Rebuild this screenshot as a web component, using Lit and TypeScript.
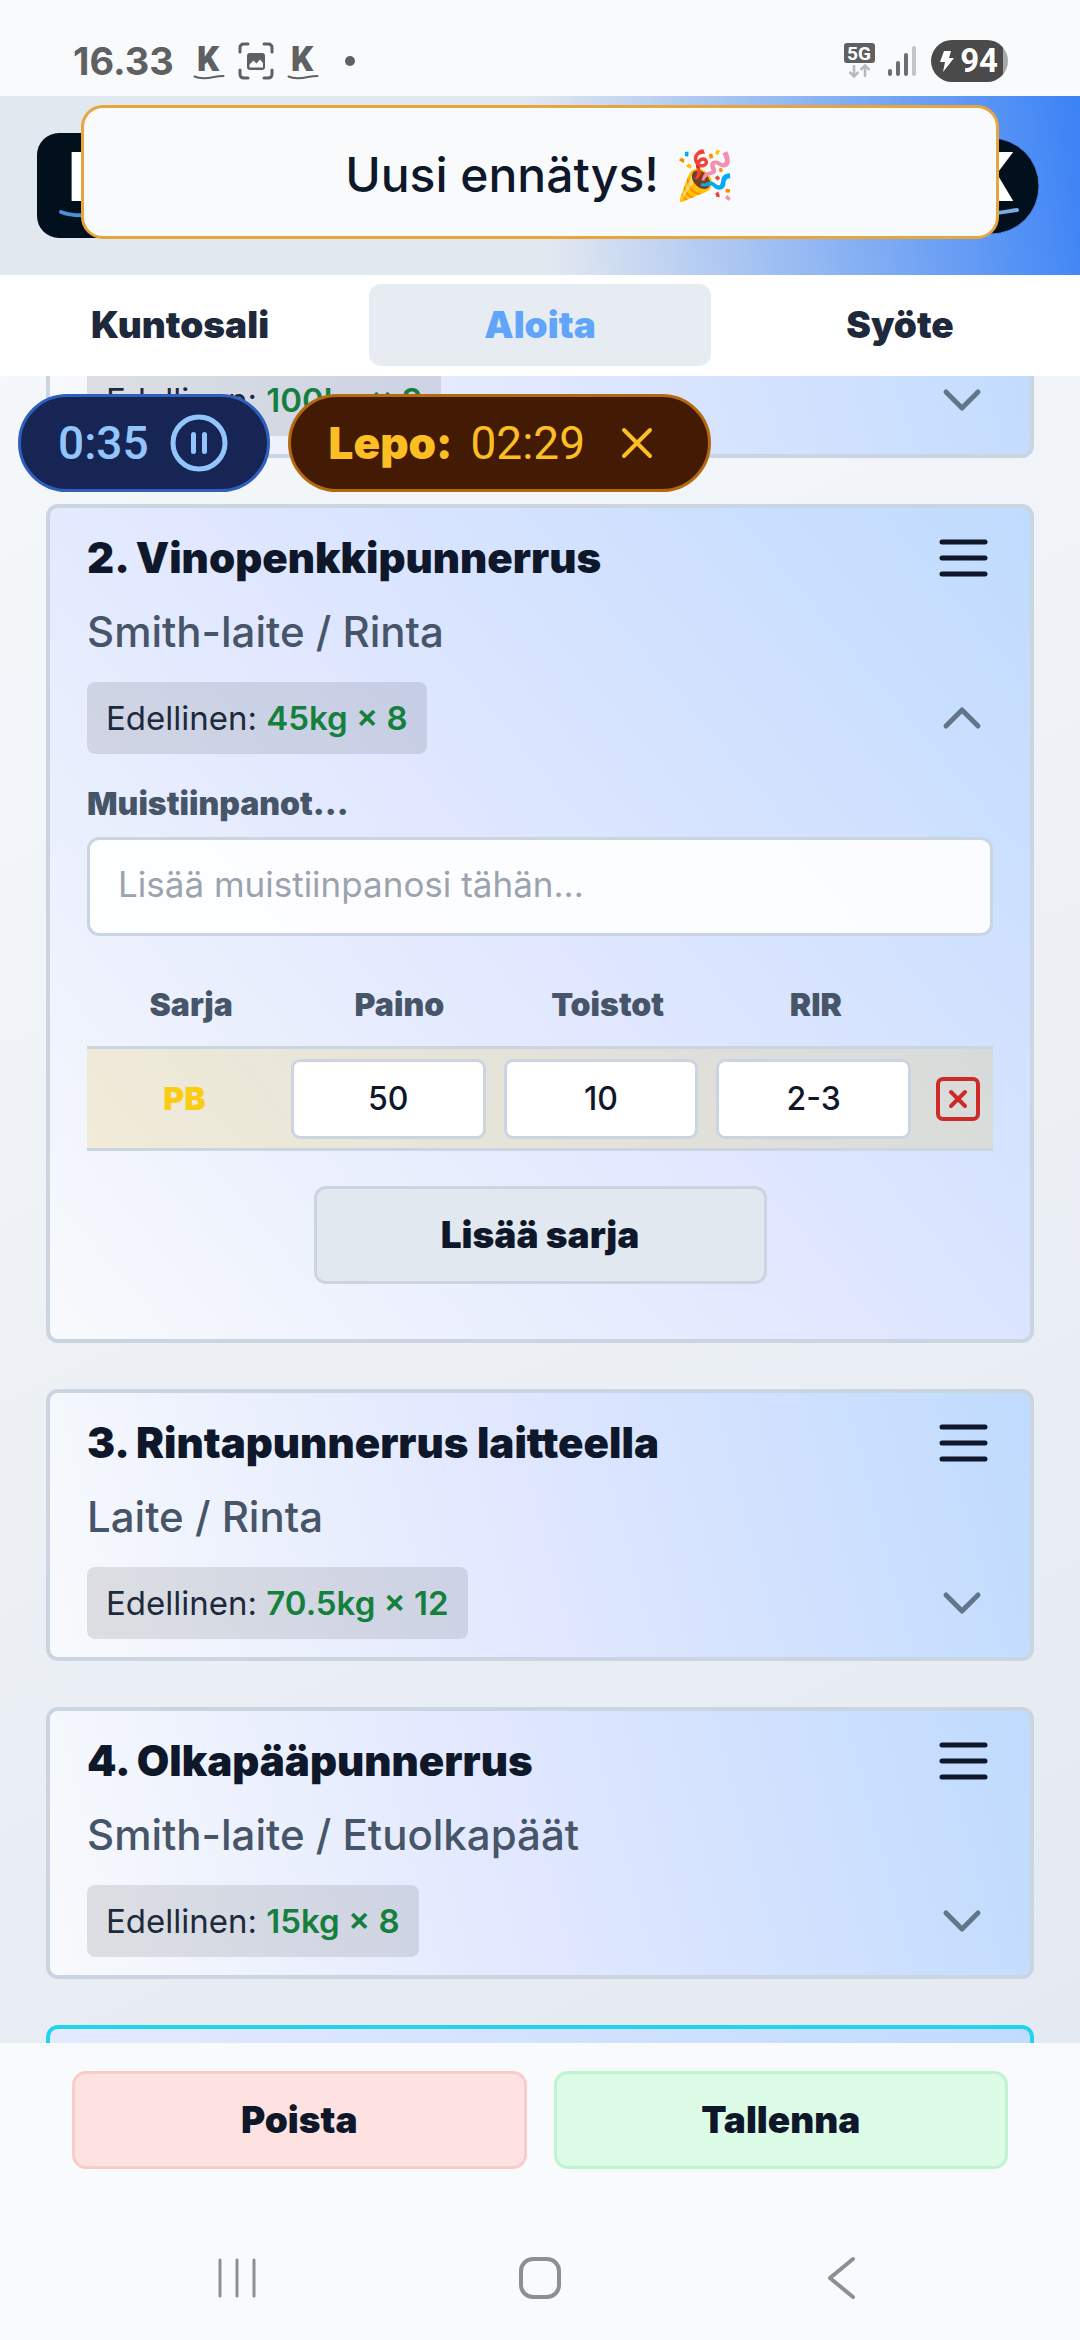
import { LitElement, html, css, svg, nothing } from "lit";
import { customElement, property } from "lit/decorators.js";
import { classMap } from "lit/directives/class-map.js";

interface Exercise {
  title?: string;
  detail?: string;
  previous?: string;
  variant?: "passed" | "open" | "upcoming";
}

const exercises: Exercise[] = [
  { previous: "100kg × 8", variant: "passed" },
  { title: "2. Vinopenkkipunnerrus", detail: "Smith-laite / Rinta", previous: "45kg × 8", variant: "open" },
  { title: "3. Rintapunnerrus laitteella", detail: "Laite / Rinta", previous: "70.5kg × 12" },
  { title: "4. Olkapääpunnerrus", detail: "Smith-laite / Etuolkapäät", previous: "15kg × 8" },
  { variant: "upcoming" },
];

const kMark = html`<svg class="kmark" viewBox="0 0 32 44" aria-hidden="true">
  <text x="15" y="32" text-anchor="middle" class="kmark-letter">K</text>
  <path d="M1.500 37.500C8 40.500 14 39.500 21 38C25 37.200 28 37 30.500 37" fill="none" stroke="currentColor" stroke-width="2" stroke-linecap="round" />
</svg>`;

@customElement("status-bar")
export class StatusBar extends LitElement {
  static styles = css`
    :host {
      display: flex;
      align-items: center;
      height: 96px;
      padding: 26px 72px 0 73px;
      box-sizing: border-box;
      flex: none;
      background: #f9fafc;
      color: #5f6062;
      font-family: Inter, "Liberation Sans", sans-serif;
    }
    .clock { font-size: 38px; font-weight: 700; line-height: 48px; margin-right: 6px; }
    .left, .right { display: flex; align-items: center; }
    .left { gap: 13px; }
    .right { margin-left: auto; gap: 12px; }
    .kmark { width: 32px; height: 44px; display: block; overflow: visible; }
    .kmark-letter { font: 900 35px Roboto, "Liberation Sans", sans-serif; fill: currentColor; }
    .dot { width: 10px; height: 10px; border-radius: 50%; background: currentColor; margin-left: 13px; }
    .icon { display: block; }
    .net-label { font: 700 19px Roboto, "Liberation Sans", sans-serif; fill: #fff; }
    .battery {
      display: flex;
      align-items: center;
      gap: 5px;
      height: 42px;
      padding: 0 10px 0 8px;
      border-radius: 21px;
      background: linear-gradient(to right, #4a4a4a 94%, #a8a8a8 94%);
      color: #fff;
      font: 700 33px/42px Roboto, "Liberation Sans", sans-serif;
      margin-left: 3px;
    }
  `;
  render() {
    return html`
      <div class="left">
        <span class="clock">16.33</span>
        ${kMark}
        <svg class="icon" width="36" height="38" viewBox="0 0 36 38" fill="none" stroke="currentColor" stroke-width="3" stroke-linecap="round" aria-hidden="true">
          <path d="M2 10V6Q2 2 6 2H10M26 2H30Q34 2 34 6V10M34 28V32Q34 36 30 36H26M10 36H6Q2 36 2 32V28" />
          <rect x="9" y="11" width="18" height="17" rx="3" fill="currentColor" stroke="none" />
          <path d="M11.500 25.500V22.500L15.500 18.500L18.500 21.500L22 17.500L25 21V25.500Z" fill="#f9fafc" stroke="none" />
        </svg>
        ${kMark}
        <span class="dot"></span>
      </div>
      <div class="right">
        <svg class="icon" width="32" height="36" viewBox="0 0 32 36" aria-hidden="true">
          <rect x="0" y="0" width="31" height="20" rx="3" fill="#5f6062" />
          <text x="15" y="17" text-anchor="middle" class="net-label">5G</text>
          <path d="M10 22V33M5.500 29L10 33.500L14.500 29M21 34V23M16.500 27L21 22.500L25.500 27" fill="none" stroke="#b9babb" stroke-width="2.500" />
        </svg>
        <svg class="icon" width="28" height="32" viewBox="0 0 28 32" stroke-width="4" stroke-linecap="round" aria-hidden="true">
          <path d="M2 26V29M10 18V29M18 10V29" stroke="#6c6d6e" />
          <path d="M26 3V29" stroke="#c3c4c5" />
        </svg>
        <span class="battery">
          <svg class="icon" width="16" height="24" viewBox="0 0 16 24" aria-hidden="true"><path d="M5 2L1 13H6L4 23L15 9H10L12 2Z" fill="#fff" /></svg>
          94
        </span>
      </div>
    `;
  }
}

@customElement("exercise-card")
export class ExerciseCard extends LitElement {
  @property({ attribute: false }) exercise!: Exercise;

  static styles = css`
    :host { display: block; flex: none; }
    * { box-sizing: border-box; }
    button, input { font: inherit; color: inherit; margin: 0; }
    .card {
      display: flex;
      flex-direction: column;
      padding: 20px 37px 18px;
      border: 4px solid #cbd5e1;
      border-radius: 12px;
      background: linear-gradient(75deg, #f8fafc, #e0e7ff, #bfdbfe);
      background-origin: border-box;
    }
    .card.open, .card.upcoming { background-image: linear-gradient(50deg, #f8fafc, #e0e7ff, #bfdbfe); }
    .card.open { padding-bottom: 55px; }
    .card.passed { min-height: 272px; justify-content: flex-end; }
    .card.upcoming { min-height: 839px; border-color: #22d3ee; }
    .row { display: flex; align-items: center; justify-content: space-between; }
    .title { margin: 0; font-size: 42px; line-height: 60px; font-weight: 900; color: #0f172a; }
    .detail { margin: 14px 0 20px; font-size: 42px; line-height: 60px; font-weight: 500; color: #475569; }
    .icon-button { display: flex; border: 0; padding: 0; background: none; }
    .menu { margin-right: 5px; }
    .toggle { margin-right: 11px; }
    .previous {
      padding: 0 19px;
      border-radius: 8px;
      background: rgba(0, 0, 0, 0.1);
      font-size: 33px;
      line-height: 72px;
      color: #1e293b;
      white-space: nowrap;
    }
    .value { color: #15803d; font-weight: 600; }
    .label { margin: 26px 0 9px; font-size: 32px; line-height: 48px; font-weight: 900; color: #475569; }
    .notes {
      width: 100%;
      height: 99px;
      padding: 0 28px 6px;
      border: 3px solid #cbd5e1;
      border-radius: 12px;
      background: rgba(255, 255, 255, 0.9);
      font-size: 35px;
      outline: none;
    }
    .notes::placeholder { color: #9ca3af; opacity: 1; }
    .sets { display: block; margin-top: 28px; }
    .sets thead, .sets tbody { display: block; }
    .sets tr { display: grid; align-items: center; }
    .sets th, .sets td { padding: 0; text-align: center; }
    .head { grid-template-columns: repeat(4, minmax(0, 1fr)) 73px; height: 82px; padding-bottom: 2px; font-size: 32px; color: #475569; }
    .head th { font-weight: 900; }
    .record {
      grid-template-columns: minmax(0, 11fr) repeat(3, minmax(0, 12fr)) 73px;
      height: 105px;
      border-top: 3px solid #cbd5e1;
      border-bottom: 3px solid #cbd5e1;
      background: rgba(234, 179, 8, 0.15);
    }
    .record .pb { font-size: 32px; font-weight: 900; color: #facc15; }
    .record .field { padding: 0 9px; }
    .entry {
      display: block;
      width: 100%;
      height: 80px;
      padding: 0;
      border: 3px solid #cbd5e1;
      border-radius: 9px;
      background: #fff;
      color: #0f172a;
      font-size: 32px;
      font-weight: 500;
      text-align: center;
      outline: none;
    }
    .remove { margin: 0 13px 0 auto; }
    .add {
      align-self: center;
      width: 50%;
      height: 98px;
      margin-top: 35px;
      padding: 0 0 2px;
      border: 3px solid #cbd5e1;
      border-radius: 12px;
      background: #e2e8f0;
      color: #0f172a;
      font-size: 37px;
      font-weight: 900;
    }
  `;

  private sets() {
    return html`
      <label class="label" for="notes">Muistiinpanot...</label>
      <input class="notes" id="notes" type="text" placeholder="Lisää muistiinpanosi tähän..." />
      <table class="sets">
        <thead>
          <tr class="head">
            <th scope="col">Sarja</th>
            <th scope="col" id="weight">Paino</th>
            <th scope="col" id="reps">Toistot</th>
            <th scope="col" id="rir">RIR</th>
            <td></td>
          </tr>
        </thead>
        <tbody>
          <tr class="record">
            <td class="pb">PB</td>
            <td class="field"><input class="entry" aria-labelledby="weight" .value=${"50"} /></td>
            <td class="field"><input class="entry" aria-labelledby="reps" .value=${"10"} /></td>
            <td class="field"><input class="entry" aria-labelledby="rir" .value=${"2-3"} /></td>
            <td>
              <button class="icon-button remove" type="button">
                <svg width="44" height="44" viewBox="0 0 44 44" fill="none" stroke="#cf2a2a" stroke-width="4" stroke-linecap="round" aria-hidden="true">
                  <rect x="2" y="2" width="40" height="40" rx="5" />
                  <path d="M15 15L29 29M29 15L15 29" />
                </svg>
              </button>
            </td>
          </tr>
        </tbody>
      </table>
      <button class="add" type="button">Lisää sarja</button>
    `;
  }

  render() {
    const { title, detail, previous, variant } = this.exercise;
    const open = variant === "open";
    return html`
      <article class=${classMap({ card: true, open, passed: variant === "passed", upcoming: variant === "upcoming" })}>
        ${title
          ? html`
              <div class="row">
                <h2 class="title">${title}</h2>
                <button class="icon-button menu" type="button">
                  <svg width="50" height="38" viewBox="0 0 50 38" stroke="#0f172a" stroke-width="5" stroke-linecap="round" aria-hidden="true">
                    <path d="M4 3H47M4 19H47M4 35H47" />
                  </svg>
                </button>
              </div>
              <p class="detail">${detail}</p>
            `
          : nothing}
        ${previous
          ? html`
              <div class="row">
                <span class="previous">Edellinen: <span class="value">${previous}</span></span>
                <button class="icon-button toggle" type="button">
                  <svg width="40" height="24" viewBox="0 0 40 24" fill="none" stroke="#64748b" stroke-width="5" stroke-linecap="round" stroke-linejoin="round" aria-hidden="true">
                    ${open ? svg`<path d="M4 20L20 4L36 20" />` : svg`<path d="M4 4L20 20L36 4" />`}
                  </svg>
                </button>
              </div>
            `
          : nothing}
        ${open ? this.sets() : nothing}
      </article>
    `;
  }
}

@customElement("app-root")
export class AppRoot extends LitElement {
  static styles = css`
    :host {
      display: flex;
      flex-direction: column;
      height: 100vh;
      overflow: hidden;
      position: relative;
      background: linear-gradient(155deg, #f8fafc, #e2e8f0);
      font-family: Inter, "Liberation Sans", sans-serif;
      color: #0f172a;
    }
    * { box-sizing: border-box; }
    button { font: inherit; color: inherit; margin: 0; }
    .header {
      position: relative;
      display: flex;
      align-items: center;
      justify-content: space-between;
      flex: none;
      height: 179px;
      padding: 0 40px 0 37px;
      background: linear-gradient(81deg, #e2e8f0 50%, #3b82f6);
    }
    .logo { display: block; }
    .logo-letter { font: 900 68px Roboto, "Liberation Sans", sans-serif; fill: #fff; }
    .toast {
      position: absolute;
      inset: 9px 81px auto;
      display: flex;
      align-items: center;
      justify-content: center;
      height: 134px;
      padding-top: 4px;
      border: 3px solid #e5a63f;
      border-radius: 22px;
      background: #f9fafc;
      font-size: 48px;
      font-weight: 500;
      gap: 16px;
    }
    .tabs {
      display: grid;
      grid-template-columns: repeat(3, minmax(0, 1fr));
      gap: 18px;
      flex: none;
      height: 101px;
      padding: 9px 9px 10px;
      background: #fff;
    }
    .tab {
      display: flex;
      align-items: center;
      justify-content: center;
      padding-bottom: 2px;
      border-radius: 12px;
      color: #1e293b;
      font-size: 37px;
      font-weight: 900;
      text-decoration: none;
    }
    .tab.active { background: #e7ecf2; color: #60a5fa; }
    .main { position: relative; flex: 1; min-height: 0; overflow: hidden; }
    .list { display: flex; flex-direction: column; gap: 46px; margin-top: -190px; padding: 0 46px; }
    .timers { position: absolute; top: 18px; left: 18px; display: flex; gap: 18px; }
    .pill { display: flex; align-items: center; height: 98px; border-radius: 49px; font-family: Roboto, "Liberation Sans", sans-serif; font-size: 46px; }
    .elapsed { gap: 21px; padding: 0 39px 0 37px; border: 3px solid #2f5fbd; background: #172554; color: #93c5fd; font-weight: 500; }
    .rest { gap: 18px; padding: 0 55px 0 38px; border: 3px solid #b4690e; background: #431a03; color: #fbbf24; }
    .rest-label { font-family: Inter, "Liberation Sans", sans-serif; font-weight: 900; font-size: 44px; }
    .icon-button { display: flex; border: 0; padding: 0; background: none; }
    .close { margin-left: 18px; }
    .footer { flex: none; display: grid; grid-template-columns: 1fr 1fr; gap: 27px; padding: 28px 72px 0; height: 186px; background: #f9fafc; }
    .action { height: 98px; padding: 0 0 2px; border: 3px solid; border-radius: 14px; font-size: 37px; font-weight: 900; color: #0f172a; }
    .discard { background: #fee2e2; border-color: #f9cccc; }
    .save { background: #dcfce7; border-color: #c0f3d1; }
    .system { flex: none; display: flex; justify-content: space-between; padding: 27px 217px 0 217px; height: 111px; background: #f9fafc; }
  `;

  render() {
    return html`
      <status-bar></status-bar>
      <header class="header">
        <svg class="logo" width="105" height="105" viewBox="0 0 105 105" aria-hidden="true">
          <rect width="105" height="105" rx="22" fill="#020f1c" />
          <text x="31" y="68" class="logo-letter">K</text>
          <path d="M24 79C40 86 70 80 84 78" fill="none" stroke="#4a8fd8" stroke-width="4" stroke-linecap="round" />
        </svg>
        <svg class="logo" width="98" height="98" viewBox="0 0 98 98" aria-hidden="true">
          <circle cx="49" cy="49" r="48" fill="#020f1c" stroke="#4a86e8" stroke-width="1" />
          <text x="27" y="64" class="logo-letter">K</text>
          <path d="M24 75C40 80 60 75 75 73" fill="none" stroke="#78a9e0" stroke-width="4" stroke-linecap="round" />
        </svg>
        <div class="toast" role="status"><span>Uusi ennätys!</span><span>🎉</span></div>
      </header>
      <nav class="tabs">
        <a class="tab" href="#kuntosali">Kuntosali</a>
        <a class="tab active" href="#aloita" aria-current="page">Aloita</a>
        <a class="tab" href="#syote">Syöte</a>
      </nav>
      <main class="main">
        <div class="list">${exercises.map((e) => html`<exercise-card .exercise=${e}></exercise-card>`)}</div>
        <div class="timers">
          <div class="pill elapsed">
            <span>0:35</span>
            <button class="icon-button" type="button">
              <svg width="58" height="58" viewBox="0 0 58 58" fill="none" stroke="currentColor" stroke-width="5" stroke-linecap="round" aria-hidden="true">
                <circle cx="29" cy="29" r="26" />
                <path d="M23.500 20.500V37.500M34.500 20.500V37.500" />
              </svg>
            </button>
          </div>
          <div class="pill rest">
            <span class="rest-label">Lepo:</span>
            <span>02:29</span>
            <button class="icon-button close" type="button">
              <svg width="32" height="32" viewBox="0 0 32 32" stroke="currentColor" stroke-width="4" stroke-linecap="round" aria-hidden="true">
                <path d="M3 3L29 29M29 3L3 29" />
              </svg>
            </button>
          </div>
        </div>
      </main>
      <footer class="footer">
        <button class="action discard" type="button">Poista</button>
        <button class="action save" type="button">Tallenna</button>
      </footer>
      <div class="system">
        <button class="icon-button" type="button">
          <svg width="42" height="44" viewBox="0 0 42 44" stroke="#8e8f90" stroke-width="3" stroke-linecap="round" aria-hidden="true">
            <path d="M3 4V40M20 4V40M37 4V40" />
          </svg>
        </button>
        <button class="icon-button" type="button">
          <svg width="44" height="44" viewBox="0 0 44 44" fill="none" stroke="#8e8f90" stroke-width="4" aria-hidden="true">
            <rect x="3" y="3" width="38" height="38" rx="12" />
          </svg>
        </button>
        <button class="icon-button" type="button">
          <svg width="42" height="44" viewBox="0 0 42 44" fill="none" stroke="#8e8f90" stroke-width="4" stroke-linecap="round" stroke-linejoin="round" aria-hidden="true">
            <path d="M32 3L9 22L32 41" />
          </svg>
        </button>
      </div>
    `;
  }
}
